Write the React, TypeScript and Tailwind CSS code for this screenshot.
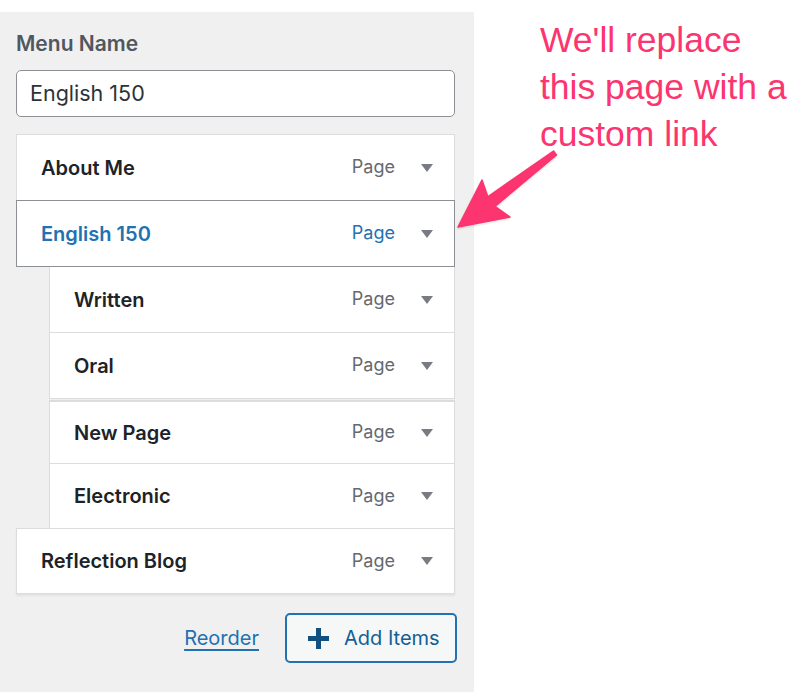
const items = [
  { title: 'About Me', sub: false },
  { title: 'English 150', sub: false, active: true },
  { title: 'Written', sub: true },
  { title: 'Oral', sub: true },
  { title: 'New Page', sub: true, gap: true },
  { title: 'Electronic', sub: true },
  { title: 'Reflection Blog', sub: false },
];

function Caret() {
  return (
    <svg width="12" height="8" viewBox="0 0 12 8" className="shrink-0">
      <polygon points="0,0 12,0 6,8" fill="#787c82" />
    </svg>
  );
}

function MenuItem({
  title,
  sub,
  active,
  first,
  gap,
  index,
}: {
  title: string;
  sub?: boolean;
  active?: boolean;
  first?: boolean;
  gap?: boolean;
  index: number;
}) {
  // first four rows sit a little taller than the last three
  const height = gap ? 'h-[64px] mt-px border-t-2' : index < 4 ? 'h-[67px]' : 'h-[66px]';
  return (
    <div
      className={`relative flex items-center bg-white border pl-6 pr-[21px] ${height} ${
        first || gap ? '' : '-mt-px'
      } ${sub ? 'ml-[33px]' : ''} ${
        active ? 'z-10 border-[#8c8f94] text-[#2271b1]' : 'border-[#dcdcde] text-[#1d2327]'
      } ${title === 'Reflection Blog' ? 'shadow-[0_2px_2px_rgba(0,0,0,0.06)]' : ''}`}
    >
      <span className="flex-1 text-[20px] font-semibold">{title}</span>
      <span
        className={`text-[18px] mr-[26px] -mt-0.5 ${active ? 'text-[#2271b1]' : 'text-[#646970]'}`}
      >
        Page
      </span>
      <Caret />
    </div>
  );
}

export default function App() {
  return (
    <div className="relative flex w-[804px] h-[692px] bg-white overflow-hidden font-['Inter',sans-serif]">
      {/* menu structure panel */}
      <div className="mt-3 w-[474px] bg-[#f0f0f1] pl-4 pr-[19px] pt-5">
        <div className="text-[21px] leading-6 font-semibold text-[#50575e]">Menu Name</div>
        <div className="mt-[14px] h-[47px] flex items-center rounded-[5px] border border-[#8c8f94] bg-white pl-[13px] text-[21.5px] text-[#2c3338]">
          English 150
        </div>

        <div className="mt-[17px] flex flex-col">
          {items.map((item, i) => (
            <MenuItem key={item.title} {...item} first={i === 0} index={i} />
          ))}
        </div>

        <div className="mt-[19px] flex items-center justify-end gap-[26px] -mr-[2px]">
          <a href="#" className="text-[20px] text-[#2271b1] underline underline-offset-4">
            Reorder
          </a>
          <button className="flex items-center gap-[15px] h-[50px] w-[172px] pl-[21px] rounded-[5px] border-2 border-[#2271b1] bg-[#f6f7f7] text-[#135e96] text-[20px]">
            <svg width="21" height="21" viewBox="0 0 21 21">
              <rect x="8" y="0" width="5" height="21" fill="#11507f" />
              <rect x="0" y="8" width="21" height="5" fill="#11507f" />
            </svg>
            <span>Add Items</span>
          </button>
        </div>
      </div>

      {/* annotation */}
      <div className="ml-[66px] mt-[17px] text-[35.5px] leading-[47px] text-[#fc346f] font-['Liberation_Sans',Arial,sans-serif]">
        <div>We'll replace</div>
        <div>this page with a</div>
        <div>custom link</div>
      </div>

      <svg
        className="absolute inset-0 pointer-events-none"
        width="804"
        height="692"
        viewBox="0 0 804 692"
      >
        <polygon
          points="553.5,151 487.8,196.8 482,180 458,227 510,217 495,206.4 556.5,155"
          fill="#fc346f"
          stroke="#fc346f"
          strokeWidth="1.5"
          strokeLinejoin="round"
          style={{ filter: 'drop-shadow(0 1px 1px rgba(0,0,0,0.15))' }}
        />
      </svg>
    </div>
  );
}
